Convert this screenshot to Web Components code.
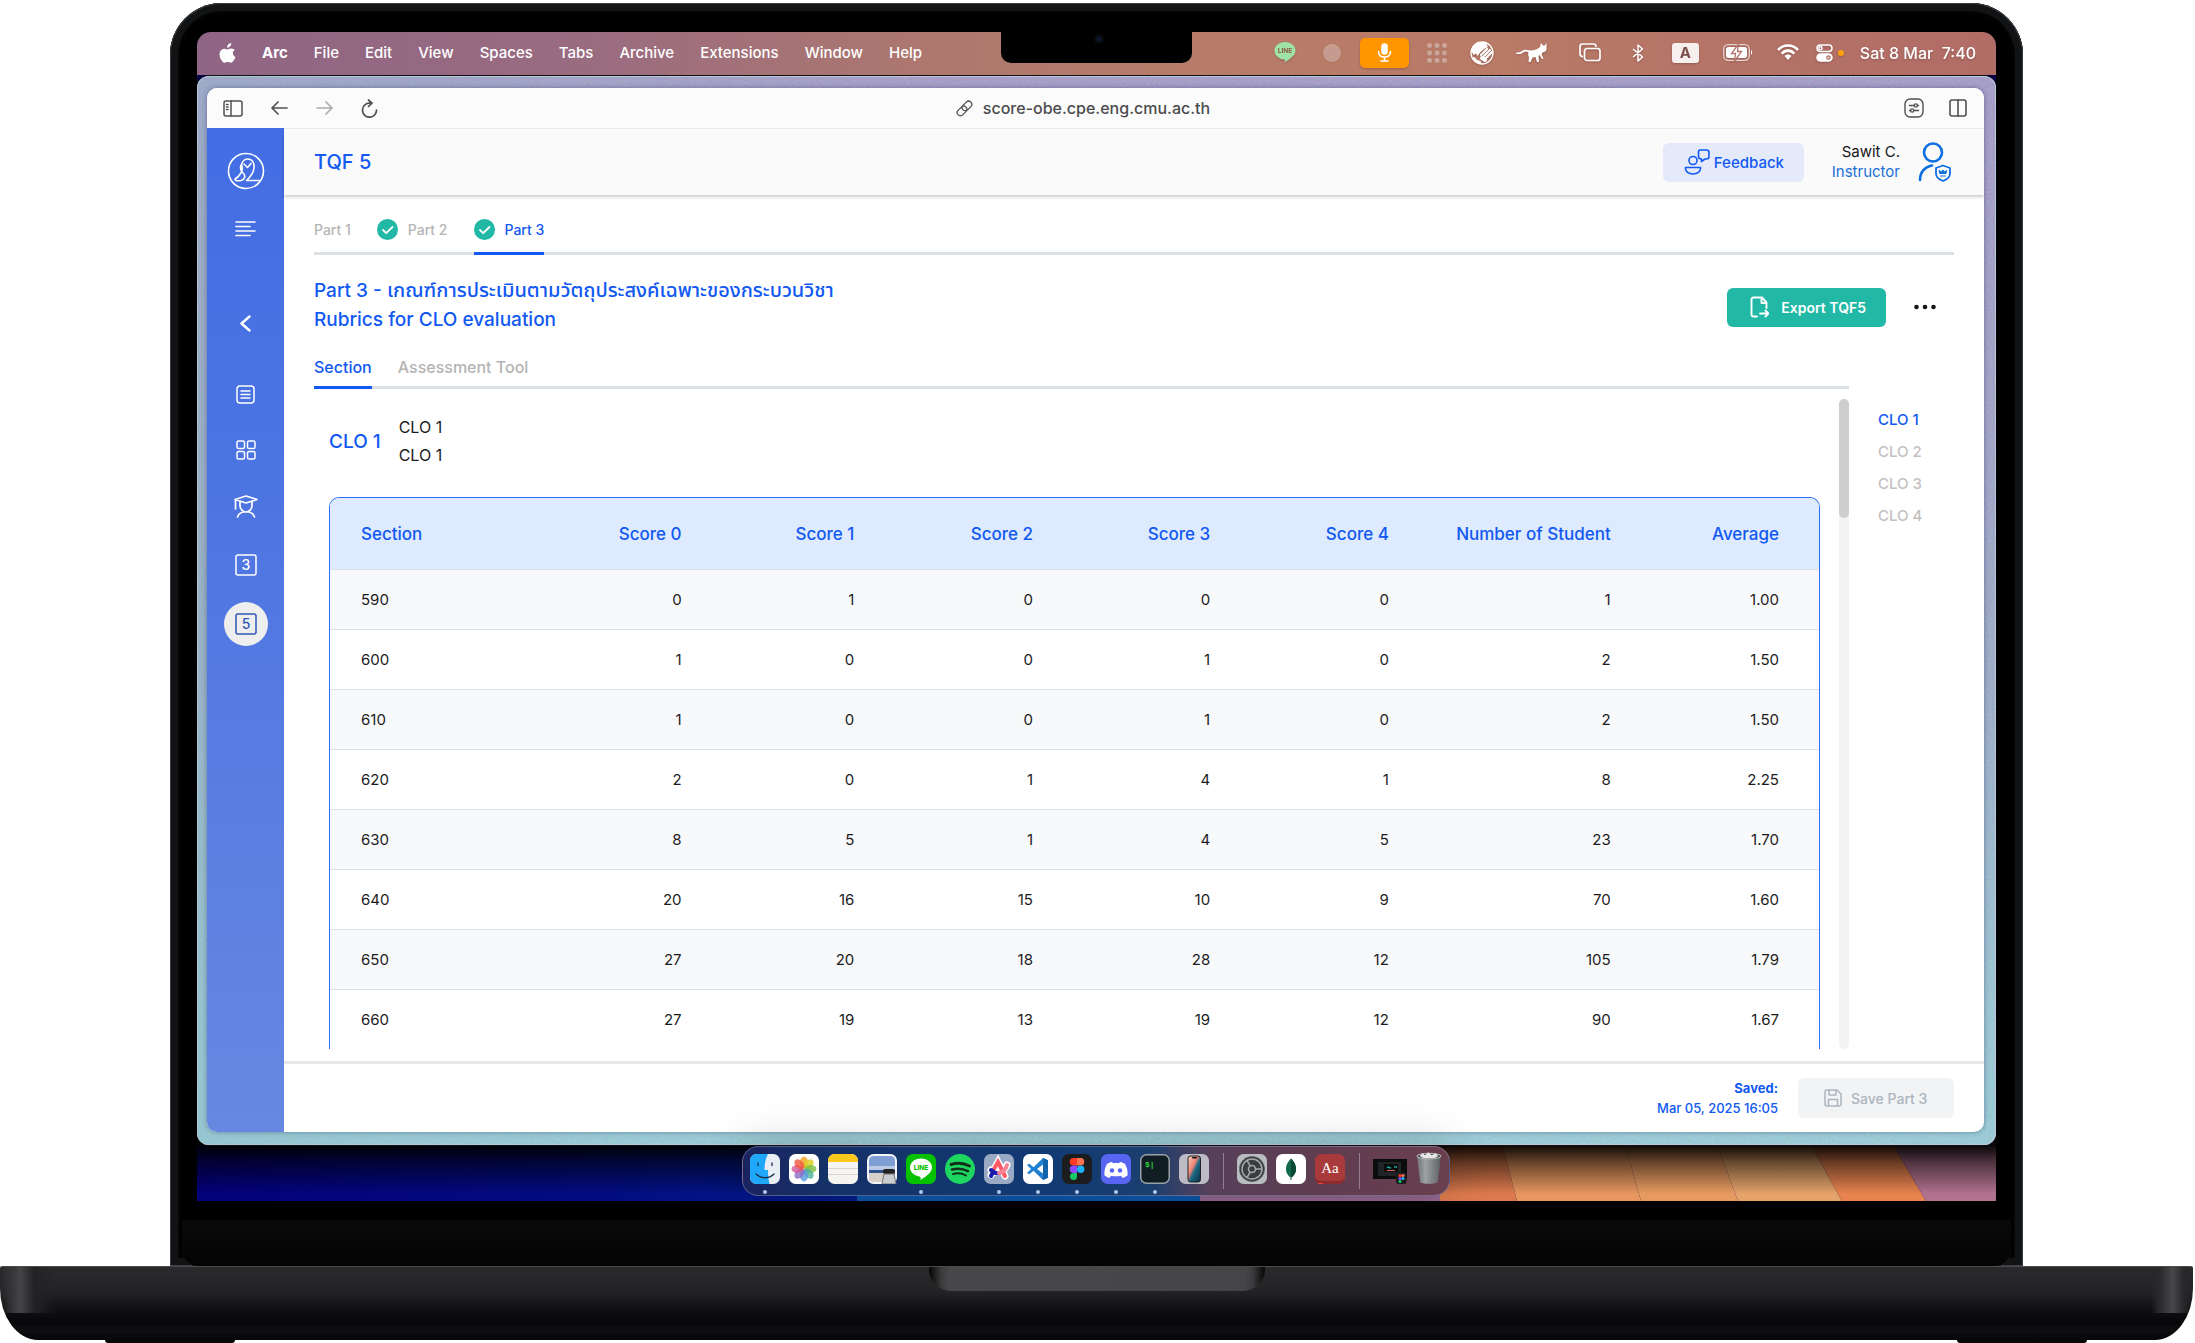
<!DOCTYPE html>
<html lang="en">
<head>
<meta charset="utf-8">
<title>TQF 5</title>
<style>
  html, body { margin: 0; height: 100%; background: #fff; }
  body {
    font-family: Inter, "Noto Sans Thai", "Noto Sans", sans-serif;
    --blue: #1159f2; --grey: #b4b4b4; --line: #dbe0e5; --teal: #21b9a5; --ink: #1c1c1e;
    --sm: 13px; --md: 14px; --base: 15px; --lg: 16px; --th: 17px; --xl: 19px; --xxl: 20px;
  }
</style>
</head>
<body>
<mac-book>
  <menu-bar></menu-bar>
  <browser-window>
    <side-nav slot="side"></side-nav>
    <app-header heading="TQF 5" user="Sawit C." role-name="Instructor"></app-header>
    <tqf-page></tqf-page>
    <save-bar></save-bar>
  </browser-window>
  <mac-dock slot="dock"></mac-dock>
</mac-book>

<script>
const reset = `*,:host{box-sizing:border-box}:host{display:block}button{font:inherit;color:inherit;background:none;border:0;padding:0;margin:0;cursor:pointer}a{color:inherit;text-decoration:none}svg{display:block;flex:none}`;
function define(name, css, html) {
  customElements.define(name, class extends HTMLElement {
    constructor() {
      super();
      const root = this.attachShadow({ mode: 'open' });
      root.innerHTML = `<style>${reset}${css}</style>` + (typeof html === 'function' ? html(this) : html);
    }
  });
}
const line = (w, h, vb, body, sw = 1.5) =>
  `<svg width="${w}" height="${h}" viewBox="${vb}" fill="none" stroke="currentColor" stroke-width="${sw}" stroke-linecap="round" stroke-linejoin="round" aria-hidden="true">${body}</svg>`;

/* ---------- laptop ---------- */
define('mac-book', `
  :host{height:100vh;min-height:900px;display:flex;flex-direction:column;padding-top:3px;overflow:hidden}
  .lid{flex:1;min-height:0;display:flex;flex-direction:column;margin:0 172px 0 170px;padding:29px 27px 0;background:#000;
    border-radius:52px 52px 0 0;box-shadow:inset 0 0 0 1px #3c3d40,inset 0 0 0 8px #121314,inset 0 0 3px 10px #060606}
  .screen{flex:1;min-height:0;display:flex;flex-direction:column;position:relative;border-radius:14px 14px 0 0;overflow:hidden;background:#05034a}
  .wall{position:absolute;left:0;bottom:0;width:100%;height:70px}
  .notch{position:absolute;top:0;left:50%;margin-left:-96px;width:191px;height:31px;background:#000;border-radius:0 0 10px 10px}
  .notch::after{content:"";position:absolute;left:50%;top:4px;width:6px;height:6px;border-radius:50%;background:#0a1428;box-shadow:0 0 0 2px #090909}
  .dock{position:absolute;left:0;right:2px;bottom:5px;display:flex;justify-content:center}
  .chin{height:65px;display:flex;margin:0 -15px;padding-top:19px}
  .chin i{flex:1;background:linear-gradient(#0a0a0a,#030303);border-radius:0 0 16px 16px;box-shadow:0 1px 0 #1c1c1d}
  .base{height:74px;display:flex;justify-content:center;margin-right:2px;border-top:1px solid #4b4b4d;border-radius:2px 2px 38px 38px/2px 2px 52px 52px;
    background:linear-gradient(90deg,rgba(20,20,21,0) 0,#3a383b 14px,#464447 20px,#222224 34px,rgba(20,20,21,0) 56px,rgba(20,20,21,0) calc(100% - 42px),#29292b calc(100% - 34px),#48484b calc(100% - 20px),#29292b calc(100% - 10px),rgba(20,20,21,0) 100%) 0 0/100% 46px no-repeat,
    linear-gradient(#2a2a2c 0,#232325 25px,#101012 42px,#070709 56px,#0e0e10 64px,#060608 100%)}
  .lip{width:336px;height:24px;border-radius:0 0 22px 22px;background:linear-gradient(90deg,#050505,#3a3a3c 12px,#48484a 20px,#454547 calc(100% - 20px),#3a3a3c calc(100% - 12px),#050505)}
  .feet{height:3px;display:flex;justify-content:space-between;padding:0 108px 0 105px}
  .feet i{width:130px;background:#090708;border-radius:0 0 6px 6px}
`, `
  <div class="lid">
    <div class="screen">
      <svg class="wall" viewBox="0 0 1799 70" preserveAspectRatio="none" aria-hidden="true">
        <defs>
          <linearGradient id="n"><stop offset="0" stop-color="#04007a"/><stop offset=".6" stop-color="#020d80"/><stop offset="1" stop-color="#04208e"/></linearGradient>
          <linearGradient id="s" x2="0" y2="1"><stop offset=".2" stop-color="#000" stop-opacity=".95"/><stop offset=".45" stop-color="#000" stop-opacity=".55"/><stop offset=".9" stop-color="#000" stop-opacity="0"/></linearGradient>
        </defs>
        <path fill="url(#n)" d="M0 0h700v70H0z"/>
        <path fill="#0d55a8" d="M660 0h344v70H660z"/>
        <path fill="#93668f" d="M1003 0h240v70h-240z"/>
        <path fill="#dc7a4d" d="M1243 0h59l18 70h-77z"/>
        <path fill="#e7975f" d="M1302 0h122l20 70h-124z"/>
        <path fill="#e89b61" d="M1424 0h91l26 70h-97z"/>
        <path fill="#e5a36a" d="M1515 0h91l39 70h-104z"/>
        <path fill="#e8834f" d="M1606 0h82l41 70h-84z"/>
        <path fill="#b1728d" d="M1688 0h111v70h-70z"/>
        <path fill="url(#s)" d="M0 0h1799v70H0z"/>
      </svg>
      <slot></slot>
      <div class="notch"></div>
      <div class="dock"><slot name="dock"></slot></div>
    </div>
    <div class="chin"><i></i></div>
  </div>
  <div class="base"><div class="lip"></div></div>
  <div class="feet"><i></i><i></i></div>
`);

/* ---------- system menu bar ---------- */
define('menu-bar', `
  :host{position:relative;height:43px;flex:none;color:#fff;font-size:var(--base);font-weight:500;background:linear-gradient(90deg,#8f6584,#9a6c80 22%,#ad776f 40%,#b77d6a 55%,#b97a66 72%,#b16c66)}
  nav{height:100%;display:flex;align-items:center;padding:0 20px 2px 22px}
  .menus{display:flex;gap:26px;align-items:center}
  b{font-weight:700}
  .tray{margin-left:auto;display:flex;align-items:center;filter:drop-shadow(0 1px 1px rgba(0,0,0,.2))}
  .tray>*{margin-right:var(--g,25px)}
  .mic{width:49px;height:30px;border-radius:5px;background:#ff9500;display:grid;place-items:center}
  .ghost{width:18px;height:18px;border-radius:50%;background:rgba(255,255,255,.28)}
  .a{width:27px;height:20px;border-radius:3px;background:#f6efee;color:#7d4f4b;font-weight:700;display:grid;place-items:center}
  .rec{width:6px;height:6px;border-radius:50%;background:#ff9f0a}
  .tray time{margin:0;white-space:pre;font-size:var(--lg)}
`, `
  <nav>
    <div class="menus">
      <svg width="17" height="20" viewBox="0 0 17 20" fill="#fff" aria-label="Apple"><path d="M12.2 0c.2 1.300-.4 2.500-1.100 3.300-.7.900-1.800 1.500-2.900 1.400-.2-1.200.4-2.400 1-3.100C9.900.7 11.200.1 12.200 0zM15.900 6.800c-1.300.8-2 1.900-2 3.400 0 1.700 1 3.100 2.600 3.700-.4 1.200-1 2.400-1.800 3.500-.8 1.100-1.600 2.300-2.900 2.300-1.300 0-1.600-.7-3.100-.7s-2 .7-3.200.8c-1.200 0-2.200-1.300-3-2.500C.8 15-.3 11 1.300 8.200 2.200 6.600 3.700 5.700 5.300 5.700c1.300 0 2.400.8 3.200.8.800 0 2.100-1 3.700-.9 1.500.1 2.800.5 3.700 1.200z"/></svg>
      <b>Arc</b><span>File</span><span>Edit</span><span>View</span><span>Spaces</span><span>Tabs</span><span>Archive</span><span>Extensions</span><span>Window</span><span>Help</span>
    </div>
    <div class="tray">
      <svg style="--g:27px" width="22" height="21" viewBox="0 0 22 21"><path fill="#9fe3a8" d="M11 0c6 0 10.500 3.800 10.500 8.500 0 2.500-1.300 4.500-3.300 6.300-2 1.900-5 4-7.200 5.700-.3-1.200.2-2-.4-3C4.700 17.200.5 13.500.5 8.500.5 3.800 5 0 11 0z"/><text x="11" y="11.300" font-size="6.500" font-weight="800" text-anchor="middle" fill="#8f6a4f">LINE</text></svg>
      <i class="ghost" style="--g:19px"></i>
      <button class="mic" style="--g:18px" aria-label="Microphone"><svg width="15" height="19" viewBox="0 0 15 19" fill="none" stroke="#fff" stroke-width="1.600" stroke-linecap="round"><rect x="5" y="1" width="5" height="10" rx="2.500" fill="#fff"/><path d="M1.500 8.500c0 3.500 2.500 5.500 6 5.500s6-2 6-5.500M7.500 14v4M4 18h7"/></svg></button>
      <svg style="--g:23px" width="20" height="20" viewBox="0 0 20 20" fill="#fff" opacity=".35"><circle cx="2.500" cy="2.500" r="2.500"/><circle cx="10" cy="2.500" r="2.500"/><circle cx="17.500" cy="2.500" r="2.500"/><circle cx="2.500" cy="10" r="2.500"/><circle cx="10" cy="10" r="2.500"/><circle cx="17.500" cy="10" r="2.500"/><circle cx="2.500" cy="17.500" r="2.500"/><circle cx="10" cy="17.500" r="2.500"/><circle cx="17.500" cy="17.500" r="2.500"/></svg>
      <svg style="--g:21px" width="25" height="24" viewBox="0 0 25 24"><circle cx="12" cy="12" r="11" fill="none" stroke="#fff" stroke-width="1.300"/><path fill="#fff" d="M8 1.700C4.500 3 2 6 1.300 10L3.500 14l2.500-1.500L7.500 15 10 11.500 14 8l4-2-2-4C13.500.7 10.500.8 8 1.700zM2 16c1.500 3.500 5 6.500 9.500 7l-1-3-3.500-1L5 16.500z"/><g fill="none" stroke="#fff" stroke-width="2.200" stroke-linecap="round"><path d="M11 14l6-6M14 15l6-6M16 17l6-6"/><path stroke-width="4" d="M12 17l3 2"/></g></svg>
      <svg style="--g:32px" width="31" height="21" viewBox="0 0 31 21" fill="#fff"><path d="M25 1l2 2.500h2L30.500.500v7c-.5 2-2 2.500-4 3l-1 2 2 4-1.500.5-2.500-4-1 1 .5 6h-2l-1.500-5-3 .5-2 4.500h-2l.5-5c-1-1-1-3-.5-4.500-3-2.500-5 0-8 1.500L0 12l.5-1.500c5 .5 6-4 10.500-2.500 4 1 8 .5 11-1.500l2-1.500z"/></svg>
      <svg style="--g:31px" width="22" height="19" viewBox="0 0 22 19" fill="none" stroke="#fff" stroke-width="1.700"><path d="M4 13.500H3.500C2 13.500 1 12.500 1 11V3.500C1 2 2 1 3.500 1h11C16 1 17 2 17 3.500V4"/><rect x="5.500" y="5.500" width="15.500" height="12" rx="2.500"/></svg>
      <svg style="--g:28px" width="12" height="18" viewBox="0 0 12 18" fill="none" stroke="#fff" stroke-width="1.500" stroke-linejoin="round"><path d="M1 5l9.500 8L6 17V1l4.500 4L1 13"/></svg>
      <span class="a" style="--g:24px">A</span>
      <svg style="--g:24px" width="30" height="17" viewBox="0 0 30 17"><rect x=".7" y=".7" width="25.600" height="15.600" rx="4.500" fill="none" stroke="#fff" stroke-opacity=".7" stroke-width="1.300"/><rect x="3" y="3" width="21" height="11" rx="2.500" fill="#fff"/><path d="M28 6c1.500.7 1.500 4.300 0 5" fill="#fff"/><path fill="#fff" stroke="#b3736a" stroke-width="1.300" d="M15.500 0L8.500 9.500h4L11.500 17l7-9.500h-4z"/></svg>
      <svg style="--g:17px" width="22" height="17" viewBox="0 0 22 17" fill="none" stroke="#fff" stroke-width="2.600"><path d="M1 6c5.500-6 14.500-6 20 0M4.600 9.600c3.700-4 9.100-4 12.800 0"/><path d="M7.500 12c2-2 5-2 7 0L11 16z" fill="#fff" stroke="none"/></svg>
      <svg style="--g:5px" width="17" height="18" viewBox="0 0 17 18" fill="none" stroke="#fff" stroke-width="1.500"><rect x="1" y="1" width="15" height="6.500" rx="3.200"/><circle cx="4.500" cy="4.200" r="1.600"/><rect x="1" y="10" width="15" height="7" rx="3.500" fill="#fff"/><circle cx="12.500" cy="13.500" r="1.600" stroke="#b3736a"/></svg>
      <i class="rec" style="--g:16px"></i>
      <time>Sat 8 Mar  7:40</time>
    </div>
  </nav>
`);

/* ---------- browser window ---------- */
define('browser-window', `
  :host{flex:1;min-height:0;position:relative;display:flex;margin:1px 0 56px;padding:12px 12px 13px 10px;border-radius:12px;
    background:linear-gradient(180deg,#a49bca 0,#a09dc8 20%,#9aaac8 55%,#98c9d8 90%,#97cedb);box-shadow:inset 0 0 0 1px #bccbe2,0 0 0 1px #111;overflow:hidden}
  .grain{position:absolute;inset:0;width:100%;height:100%;opacity:.28}
  .tint{position:absolute;inset:0;background:linear-gradient(90deg,rgba(140,190,200,.35),transparent 40%)}
  .win{flex:1;min-width:0;display:flex;flex-direction:column;position:relative;border-radius:10px;overflow:hidden;background:#fff;box-shadow:0 0 5px rgba(40,40,90,.45)}
  .bar{height:40px;flex:none;display:grid;grid-template-columns:1fr auto 1fr;align-items:center;padding:0 17px 0 16px;background:#fbfbfb;color:#505050}
  .l{display:flex;align-items:center;gap:28px}.r{display:flex;align-items:center;gap:25px;justify-content:flex-end}
  .off{opacity:.45}
  .url{display:flex;align-items:center;gap:10px;font-size:var(--lg);font-weight:500;color:#4c4c4e;margin-right:24px}
  .row{flex:1;min-height:0;display:flex}
  main{flex:1;min-width:0;display:flex;flex-direction:column;border-top:1px solid #ececec}
`, `
  <svg class="grain" aria-hidden="true"><filter id="g"><feTurbulence type="fractalNoise" baseFrequency=".45" numOctaves="2"/></filter><rect width="100%" height="100%" filter="url(#g)"/></svg>
  <div class="tint"></div>
  <div class="win">
    <div class="bar">
      <div class="l">
        <button aria-label="Sidebar">${line(20, 17, '0 0 20 17', '<rect x="1" y="1" width="18" height="15" rx="2"/><path d="M8 1v15M3.500 4.500h1.500M3.500 7h1.500M3.500 9.500h1.500"/>')}</button>
        <button aria-label="Back">${line(17, 14, '0 0 17 14', '<path d="M16 7H1M7 1L1 7l6 6"/>', 1.7)}</button>
        <button aria-label="Forward" class="off">${line(17, 14, '0 0 17 14', '<path d="M1 7h15M10 1l6 6-6 6"/>', 1.7)}</button>
        <button aria-label="Reload">${line(17, 19, '0 0 17 19', '<path d="M9.500 4.200H8A7 7 0 1 0 15.500 11M7.500 1l3.500 3.200-3.500 3.300"/>', 1.7)}</button>
      </div>
      <button class="url">${line(17, 17, '0 0 17 17', '<g transform="rotate(-45 8.500 8.500)"><rect x="-.5" y="5.300" width="11" height="6.400" rx="3.200"/><rect x="6.500" y="5.300" width="11" height="6.400" rx="3.200"/></g>', 1.2)}<span>score-obe.cpe.eng.cmu.ac.th</span></button>
      <div class="r">
        <button aria-label="Site settings">${line(20, 20, '0 0 20 20', '<rect x="1" y="1" width="18" height="18" rx="5"/><path d="M5.500 7.500H10M13.500 7.500h1M5.500 12.500h1M10 12.500h4.500"/><circle cx="11.800" cy="7.500" r="1.600"/><circle cx="8.200" cy="12.500" r="1.600"/>', 1.4)}</button>
        <button aria-label="Split view">${line(18, 18, '0 0 18 18', '<rect x="1" y="1" width="16" height="16" rx="2"/><path d="M9 1v16"/>', 1.6)}</button>
      </div>
    </div>
    <div class="row"><slot name="side"></slot><main><slot></slot></main></div>
  </div>
`);

/* ---------- blue side navigation ---------- */
const numberIcon = n => `<svg width="22" height="22" viewBox="0 0 22 22" aria-hidden="true"><rect x="1" y="1" width="20" height="20" rx="2" fill="none" stroke="currentColor" stroke-width="1.500"/><text x="11" y="16" font-size="14" font-weight="500" text-anchor="middle" fill="currentColor">${n}</text></svg>`;
define('side-nav', `
  :host{width:77px;flex:none;background:linear-gradient(#436de3,#4c74e2 35%,#6788e1);color:#fff}
  nav{display:flex;flex-direction:column;align-items:center;padding-top:24px}
  a,button{display:grid;place-items:center;width:44px;height:44px;border-radius:50%;margin-bottom:var(--g,15px)}
  a:first-child{height:36px;--g:19px}
  .on{background:#eee;color:#2f57b5}
`, `
  <nav>
    <a href="#home" aria-label="Home">${line(38, 38, '0 0 38 38', '<circle cx="19" cy="19" r="17.500"/><path d="M8 27c4-2 7-7 7.500-11C13 11 17 7 20.500 7c5 0 7 4 6.500 9-.5 6-4 9-7.500 12.500H32M8 27c0 2 3 2 6 1.500 4-1 5-5 2-7.500-2-2-3.500-4-2-8M17 12l3.500 3.500L24 11.500"/>', 1.6)}</a>
    <button aria-label="Menu" style="--g:50px">${line(21, 16, '0 0 21 16', '<path d="M1 1h19M1 5.500h14M1 10h19M1 14.500h14"/>', 1.6)}</button>
    <a href="#back" aria-label="Back" style="--g:27px">${line(11, 17, '0 0 11 17', '<path d="M9.500 1.500l-8 7 8 7"/>', 2.4)}</a>
    <a href="#list" aria-label="Course" style="--g:12px">${line(19, 19, '0 0 19 19', '<rect x="1" y="1" width="17" height="17" rx="3"/><path d="M5 6h9M5 9.500h9M5 13h9"/>', 1.5)}</a>
    <a href="#grid" aria-label="Sections" style="--g:12px">${line(20, 20, '0 0 20 20', '<rect x="1" y="1" width="7.500" height="7.500" rx="1.600"/><rect x="11.500" y="1" width="7.500" height="7.500" rx="1.600"/><rect x="1" y="11.500" width="7.500" height="7.500" rx="1.600"/><rect x="11.500" y="11.500" width="7.500" height="7.500" rx="1.600"/>', 1.5)}</a>
    <a href="#roster" aria-label="Students">${line(24, 23, '0 0 24 23', '<path d="M12 1l11 3.500-11 3.500L1 4.500zM1.500 4.500V14M6 6.500v4c0 3.500 3 6.500 6 6.500s6-3 6-6.500v-4M3.500 22c1-3 3-4.500 6-5M20.500 22c-1-3-3-4.500-6-5"/>', 1.7)}</a>
    <a href="#tqf3" aria-label="TQF 3">${numberIcon(3)}</a>
    <a href="#tqf5" aria-label="TQF 5" class="on">${numberIcon(5)}</a>
  </nav>
`);

/* ---------- page header ---------- */
define('app-header', `
  :host{flex:none;position:relative}
  header{height:66px;display:flex;align-items:center;padding:0 32px 0 30px;background:#fafafa;box-shadow:0 2px 3px rgba(0,0,0,.2)}
  h1{margin:0 auto 0 0;font-size:var(--xxl);font-weight:500;color:var(--blue)}
  .fb{display:flex;align-items:center;gap:4px;width:141px;height:39px;padding-left:21px;border-radius:6px;background:#e4eafa;color:var(--blue);font-size:var(--base);font-weight:500;margin-right:28px}
  .who{display:flex;flex-direction:column;text-align:right;font-size:var(--base);line-height:20px;font-weight:400;color:#161616;margin-right:18px}
  .who span+span{color:#1a70d8}
`, el => `
  <header>
    <h1>${el.getAttribute('heading')}</h1>
    <button class="fb">${line(26, 26, '0 0 26 26', '<circle cx="9" cy="11.500" r="4"/><path d="M1.500 18.500h15v1c0 3-3 5.500-7.500 5.500s-7.500-2.500-7.500-5.500zM16 1h6.500C24 1 25 2 25 3.500v4C25 9 24 10 22.500 10H21l-3.500 2.500V10C15 10 14.500 9 14.500 7.500v-4C14.500 2 15 1 16 1z"/>', 1.6)}Feedback</button>
    <div class="who"><span>${el.getAttribute('user')}</span><span>${el.getAttribute('role-name')}</span></div>
    <svg width="34" height="40" viewBox="0 0 34 40" fill="none" stroke="#0e6fe0" stroke-width="2.600" stroke-linecap="round" stroke-linejoin="round" aria-hidden="true"><circle cx="15" cy="10.500" r="9"/><path d="M2 38c0-8 5-13.500 12-14.500"/><path stroke-width="1.800" d="M25 23.500l7 2.500v5.500c0 3.500-3 6-7 7.500-4-1.500-7-4-7-7.500V26z"/><path stroke-width="1" fill="#0e6fe0" d="M21.500 28.500l2 1.500 1.500-2 1.500 2 2-1.500-.5 3h-6zM22.500 34h5"/></svg>
  </header>
`);

/* ---------- tabs ---------- */
define('tab-strip', `
  .tabs{display:flex;gap:26px;border-bottom:3px solid var(--line);font-size:var(--fs,var(--md));font-weight:500;color:var(--grey)}
  button{display:flex;align-items:center;gap:10px;height:var(--h);margin-bottom:-3px;border-bottom:3px solid transparent}
  button[aria-selected=true]{color:var(--blue);border-color:var(--blue)}
`, el => `<div class="tabs" role="tablist">${el.getAttribute('tabs').split('|').map(t => {
  const on = t.includes('*'), ok = t.includes('+');
  return `<button role="tab" aria-selected="${on}">${ok ? '<svg width="21" height="21" viewBox="0 0 21 21" aria-hidden="true"><circle cx="10.500" cy="10.500" r="10.500" fill="#21b9a5"/><path d="M6 11l3.200 3.200L15.500 8" fill="none" stroke="#fff" stroke-width="1.800" stroke-linecap="round" stroke-linejoin="round"/></svg>' : ''}${t.replace(/[*+]/g, '')}</button>`;
}).join('')}</div>`);

/* ---------- rubric table ---------- */
const scores = [
  [590, 0, 1, 0, 0, 0, 1, '1.00'], [600, 1, 0, 0, 1, 0, 2, '1.50'], [610, 1, 0, 0, 1, 0, 2, '1.50'],
  [620, 2, 0, 1, 4, 1, 8, '2.25'], [630, 8, 5, 1, 4, 5, 23, '1.70'], [640, 20, 16, 15, 10, 9, 70, '1.60'],
  [650, 27, 20, 18, 28, 12, 105, '1.79'], [660, 27, 19, 13, 19, 12, 90, '1.67']];
const heads = ['Section', 'Score 0', 'Score 1', 'Score 2', 'Score 3', 'Score 4', 'Number of Student', 'Average'];
const colWidths = [14, 12.3, 11.6, 12, 11.9, 12, 14.9, 11.3];
define('score-table', `
  .box{border:1px solid #2f6df3;border-bottom:0;border-radius:10px 10px 0 0;overflow:hidden}
  table{width:100%;table-layout:fixed;border-collapse:separate;border-spacing:0;font-size:var(--base);color:var(--ink)}
  th,td{height:60px;padding:0 40px 0 0;text-align:right;font-weight:400;border-bottom:1px solid #dde2e7}
  th{height:72px;padding-left:0;background:#deeafe;color:var(--blue);font-size:var(--th);font-weight:500;white-space:nowrap}
  th:first-child,td:first-child{text-align:left;padding:0 0 0 31px}
  tbody tr:nth-child(odd){background:#f8f9fb}
`, `<div class="box"><table>
  <colgroup>${colWidths.map(w => `<col style="width:${w}%">`).join('')}</colgroup>
  <thead><tr>${heads.map(h => `<th scope="col">${h}</th>`).join('')}</tr></thead>
  <tbody>${scores.map(r => `<tr>${r.map(c => `<td>${c}</td>`).join('')}</tr>`).join('')}</tbody>
</table></div>`);

/* ---------- TQF 5 page ---------- */
define('tqf-page', `
  :host{flex:1;min-height:0;display:flex;flex-direction:column;padding:12px 30px 12px}
  .part{--h:48px}
  .title{display:flex;align-items:center;padding-top:21px}
  h2{margin:0 auto 0 0;padding-bottom:4px;font-size:var(--xl);line-height:29px;font-weight:500;color:var(--blue)}
  h2 span{font-size:var(--xxl);line-height:1}
  .exp{display:flex;align-items:center;gap:12px;height:39px;padding:0 20px 0 23px;border-radius:6px;background:var(--teal);color:#fff;font-size:var(--md);font-weight:600}
  .more{margin:0 18px 0 28px}
  .cols{flex:1;min-height:0;display:flex;gap:29px}
  .left{flex:1;min-width:0;display:flex;flex-direction:column}
  .sub{--fs:var(--lg);--h:42px;margin-top:9px}
  .scroll{flex:1;min-height:0;display:flex;gap:19px;padding-top:10px}
  .view{flex:1;min-width:0;overflow:hidden;padding-left:15px}
  .track{width:10px;border-radius:5px;background:#f3f3f3}
  .thumb{height:119px;border-radius:5px;background:#cecece}
  .clo{display:flex;align-items:center;gap:18px;padding:14px 0 28px;height:98px}
  h3{margin:0;font-size:var(--xl);font-weight:500;color:var(--blue)}
  p{margin:0;font-size:var(--lg);line-height:28px;font-weight:400;color:var(--ink)}
  .toc{width:76px;padding-top:66px;display:flex;flex-direction:column;font-size:var(--base);line-height:32px;font-weight:500;color:#c4bfbf}
  .toc a:first-child{color:var(--blue)}
`, `
  <tab-strip class="part" tabs="Part 1|+Part 2|+*Part 3"></tab-strip>
  <div class="title">
    <h2>Part 3 - <span lang="th">เกณฑ์การประเมินตามวัตถุประสงค์เฉพาะของกระบวนวิชา</span><br>Rubrics for CLO evaluation</h2>
    <button class="exp">${line(19, 22, '0 0 19 22', '<path d="M7 20.500H3.500C2 20.500 1.500 19.500 1.500 18.500v-15C1.500 2 2.500 1.500 3.500 1.500H12l4.500 5V12M11.500 2v5h5M10 17.500h8M15.500 14.500l3 3-3 3"/>', 1.9)}Export TQF5</button>
    <button class="more" aria-label="More"><svg width="22" height="6" viewBox="0 0 22 6" fill="#161616"><circle cx="2.500" cy="3" r="2.300"/><circle cx="11" cy="3" r="2.300"/><circle cx="19.500" cy="3" r="2.300"/></svg></button>
  </div>
  <div class="cols">
    <div class="left">
      <tab-strip class="sub" tabs="*Section|Assessment Tool"></tab-strip>
      <div class="scroll">
        <div class="view">
          <div class="clo"><h3>CLO 1</h3><p>CLO 1<br>CLO 1</p></div>
          <score-table></score-table>
        </div>
        <div class="track"><div class="thumb"></div></div>
      </div>
    </div>
    <nav class="toc"><a href="#clo1">CLO 1</a><a href="#clo2">CLO 2</a><a href="#clo3">CLO 3</a><a href="#clo4">CLO 4</a></nav>
  </div>
`);

/* ---------- save bar ---------- */
define('save-bar', `
  :host{flex:none}
  footer{height:71px;display:flex;align-items:center;justify-content:flex-end;gap:20px;padding:0 30px;border-top:3px solid #e8e8e8}
  .s{text-align:right;font-size:var(--sm);line-height:20px;font-weight:500;color:var(--blue)}
  b{font-weight:700}
  button{display:flex;align-items:center;gap:9px;height:40px;width:156px;padding-left:26px;border-radius:6px;background:#f1f3f5;color:#adb5bd;font-size:var(--md);font-weight:500}
`, `
  <footer>
    <div class="s"><b>Saved:</b><br>Mar 05, 2025 16:05</div>
    <button disabled>${line(18, 18, '0 0 18 18', '<path d="M3 1h10l4 4v10c0 1-1 2-2 2H3c-1 0-2-1-2-2V3c0-1 1-2 2-2zM5 1v5h7V1M4.500 17v-6.500h9V17"/>', 1.5)}Save Part 3</button>
  </footer>
`);

/* ---------- dock ---------- */
const app = (bg, body, dot) => `<button class="app${dot ? ' dot' : ''}"><svg width="30" height="30" viewBox="0 0 30 30">${bg ? `<rect width="30" height="30" rx="6.500" fill="${bg}"/>` : ''}${body}</svg></button>`;
const petals = ['#f5a623', '#d9d021', '#7cc243', '#4fb39a', '#5a9be0', '#8d6cc7', '#d45a9b', '#ef5b3f']
  .map((c, i) => `<ellipse cx="15" cy="8.500" rx="4" ry="6" fill="${c}" opacity=".82" transform="rotate(${i * 45} 15 15)"/>`).join('');
define('mac-dock', `
  .dock{display:flex;gap:9px;height:50px;padding:7px 7px 0;border-radius:16px;border:1px solid rgba(160,170,210,.4);
    background:linear-gradient(90deg,#1b235f,#153168 12%,#123b74 45%,#1b3f6e 58%,#57405a 66%,#5e3d51 80%,#6a3f4e);box-shadow:0 0 44px rgba(0,0,0,.2)}
  .app{position:relative;height:30px}
  .dot::after{content:"";position:absolute;left:13px;top:36px;width:4px;height:4px;border-radius:50%;background:#b3c8f0}
  .sep{width:1px;height:36px;margin:-1px 4px 0 5px;background:rgba(200,190,210,.5)}
`, `
  <div class="dock">
    ${app('#e9edf4', '<path fill="#1fa8fb" d="M6.500 0H18c-2.500 5-3.500 10-3.500 16H18c0 5 .5 10 1.500 14h-13A6.500 6.500 0 0 1 0 23.500v-17A6.500 6.500 0 0 1 6.500 0z"/><g fill="none" stroke="#16324f" stroke-width="1.300" stroke-linecap="round"><path d="M8 9v2.500M22 9v2.500M6 20c5 5 13 5 18 0"/></g>', 1)}
    ${app('#fff', petals)}
    ${app('#f5f4f0', '<path fill="#fcc81c" d="M6.500 0h17A6.500 6.500 0 0 1 30 6.500V8H0V6.500A6.500 6.500 0 0 1 6.500 0z"/><path stroke="#d8d6d2" d="M0 14.500h30M0 20.500h30"/>')}
    ${app('#f2f4f8', '<rect x="2" y="2" width="26" height="26" rx="4.500" fill="#7f9fd4"/><path fill="#b9c9e6" d="M2 12h26v4H2z"/><path fill="#31528a" d="M2 16h26v3H2z"/><path fill="#d8d0c8" d="M2 19h20v9H6c-2 0-4-1-4-3z"/><rect x="16" y="15" width="12" height="5" rx="2" fill="#222"/><path fill="#c9ccd0" stroke="#777" d="M17 20h10l2 10H15z"/>')}
    ${app('#06c100', '<path fill="#fff" d="M15 4.500c6.500 0 11 4 11 9 0 4-4 8-11.500 12.500.5-2 .3-3-1-3.500C8 21.500 4 18 4 13.500c0-5 4.500-9 11-9z"/><text x="15" y="16" font-size="6.500" font-weight="800" text-anchor="middle" fill="#06c100">LINE</text>', 1)}
    ${app('', '<circle cx="15" cy="15" r="15" fill="#1ed760"/><g fill="none" stroke="#12301c" stroke-linecap="round"><path stroke-width="3" d="M6 10.500c6-2 13-1.500 18.500 1.500"/><path stroke-width="2.500" d="M7 15.500c5.500-1.500 11-1 16 1.700"/><path stroke-width="2" d="M8 20c4.500-1.200 9-.8 13 1.500"/></g>')}
    ${app('#9aa9c4', '<g fill="none" stroke-linecap="round"><path stroke="#fff" stroke-width="7" d="M7 21L14 8l7 14M7 16c6 5 13 2 16-5"/><path stroke="#ff5a66" stroke-width="4" d="M10 15l4-7 7 14"/><path stroke="#1a1ab0" stroke-width="4" d="M7 22l2-4M7 16c2 2 5 3.500 8 3.500"/><path stroke="#f78296" stroke-width="4" d="M15 19c4-1 7-4 8-8"/></g>', 1)}
    ${app('#fff', '<path fill="#1f7fd0" d="M20 4l5 2.300v17.400L20 26l-9.500-9.200-4.200 3.400L4 19l4-4-4-4 2.300-1.200 4.200 3.400zM20 10.500L14 15l6 4.500z"/><path fill="#0f64ab" d="M20 4l5 2.300v17.400L20 26z"/>', 1)}
    ${app('#1d1d1f', '<path fill="#ff3b1f" d="M11.500 4H15v7.500h-3.500a3.700 3.700 0 0 1 0-7.500z"/><path fill="#ff7250" d="M15 4h3.500a3.700 3.700 0 0 1 0 7.500H15z"/><path fill="#8a4dff" d="M11.500 11.500H15V19h-3.500a3.700 3.700 0 0 1 0-7.500z"/><circle cx="18.700" cy="15.200" r="3.700" fill="#19b5fe"/><path fill="#17c964" d="M11.500 19H15v3.200a3.500 3.500 0 1 1-3.500-3.200z"/>', 1)}
    ${app('#5865f2', '<path fill="#fff" d="M11 8l1 1.300c2-.4 4-.4 6 0L19 8c2 .3 3.500.9 5 2 2 3.500 3 7.500 2.500 11.500-1.700 1.300-3.300 2-5 2.500l-1.500-2.300c-3.300.8-6.700.8-10 0L8.500 24c-1.700-.5-3.300-1.200-5-2.500C3 17.500 4 13.500 6 10c1.500-1.100 3-1.700 5-2z"/><circle cx="11" cy="16.500" r="2.200" fill="#5865f2"/><circle cx="19" cy="16.500" r="2.200" fill="#5865f2"/>', 1)}
    ${app('#9aa2a8', '<rect x="1.500" y="1.500" width="27" height="27" rx="5" fill="#101d22"/><text x="5" y="12.500" font-size="8" font-family="Liberation Mono" font-weight="700" fill="#2bd13a">$|</text>', 1)}
    ${app('#bdbcc6', '<defs><linearGradient id="ph" x2="1" y2="1"><stop offset=".1" stop-color="#f6c0ac"/><stop offset=".4" stop-color="#ee8272"/><stop offset=".55" stop-color="#1d6a86"/><stop offset="1" stop-color="#0c2c40"/></linearGradient></defs><rect x="9" y="2" width="12.500" height="26" rx="2.500" fill="url(#ph)" stroke="#222" stroke-width="1"/><rect x="13" y="3" width="5" height="1.500" rx=".7" fill="#111"/>')}
    <i class="sep"></i>
    ${app('#b9bdc0', '<circle cx="15" cy="15" r="12.500" fill="#3a3c3f"/><circle cx="15" cy="15" r="10" fill="none" stroke="#a5a8ab" stroke-width="1.500"/><g fill="none" stroke="#a5a8ab" stroke-width="1.600"><circle cx="15" cy="15" r="3.500"/><path d="M18.500 15H25M13.200 12L10 6.300M13.200 18L10 23.700"/></g><circle cx="15" cy="15" r="12.500" fill="none" stroke="#55585b" stroke-width="1" stroke-dasharray="1.500 1"/>')}
    ${app('#fff', '<path fill="#13694a" d="M15 4.500c4 4 5 7.500 5 11 0 3.500-2 6-4.500 8V26h-1v-2.500C12 21.500 10 19 10 15.500c0-3.500 1-7 5-11z"/><path fill="#0b4a35" d="M15 4.500c4 4 5 7.500 5 11 0 3.500-2 6-5 8z"/>')}
    ${app('#a93a3b', '<path fill="#8a2c2e" d="M0 24c0 3.500 3 6 6.500 6h17a6.500 6.500 0 0 0 6.500-6c-2 2-4 3-6.500 3h-17C4 27 2 26 0 24z"/><text x="15" y="19" font-size="15" font-family="Liberation Serif" text-anchor="middle" fill="#fff">Aa</text><path fill="#f04038" d="M3 29h5v2l-2.500-1L3 31z"/>')}
    <i class="sep"></i>
    <button class="app"><svg width="34" height="30" viewBox="0 0 34 30"><path fill="#0b0d0d" d="M0 5h34v20H0z"/><path fill="#202426" d="M5 8h23v14H5z"/><path fill="#0b0d0d" d="M11 10h14v8H11z"/><path stroke="#1fa6a0" stroke-width="1.500" d="M14 13l4 1M21 13h3"/><path stroke="#d66" stroke-width="1" d="M14 16.500h8"/><rect x="23" y="18" width="10.500" height="12" rx="2.500" fill="#1a1a1c"/><circle cx="27" cy="21.500" r="1.600" fill="#ff3b1f"/><circle cx="30" cy="21.500" r="1.600" fill="#ff7250"/><circle cx="27" cy="24.500" r="1.600" fill="#8a4dff"/><circle cx="30" cy="24.500" r="1.600" fill="#19b5fe"/><circle cx="27" cy="27.500" r="1.500" fill="#17c964"/></svg></button>
    <button class="app"><svg width="26" height="32" viewBox="0 0 28 32" overflow="visible"><defs><linearGradient id="tr"><stop offset="0" stop-color="#6e7274"/><stop offset=".35" stop-color="#9ea2a3"/><stop offset="1" stop-color="#5c5f61"/></linearGradient></defs><path fill="url(#tr)" d="M1 0h26l-3.500 29c-.5 2.500-18.500 2.500-19 0z"/><ellipse cx="14" cy="1" rx="13" ry="3" fill="#4a4d4e" stroke="#c4c7c8"/><path fill="#e8e8e8" d="M4 1l3-3 3 2 3-3 4 3 4-2 3 3-4 2H8z"/></svg></button>
  </div>
`);
</script>
</body>
</html>
